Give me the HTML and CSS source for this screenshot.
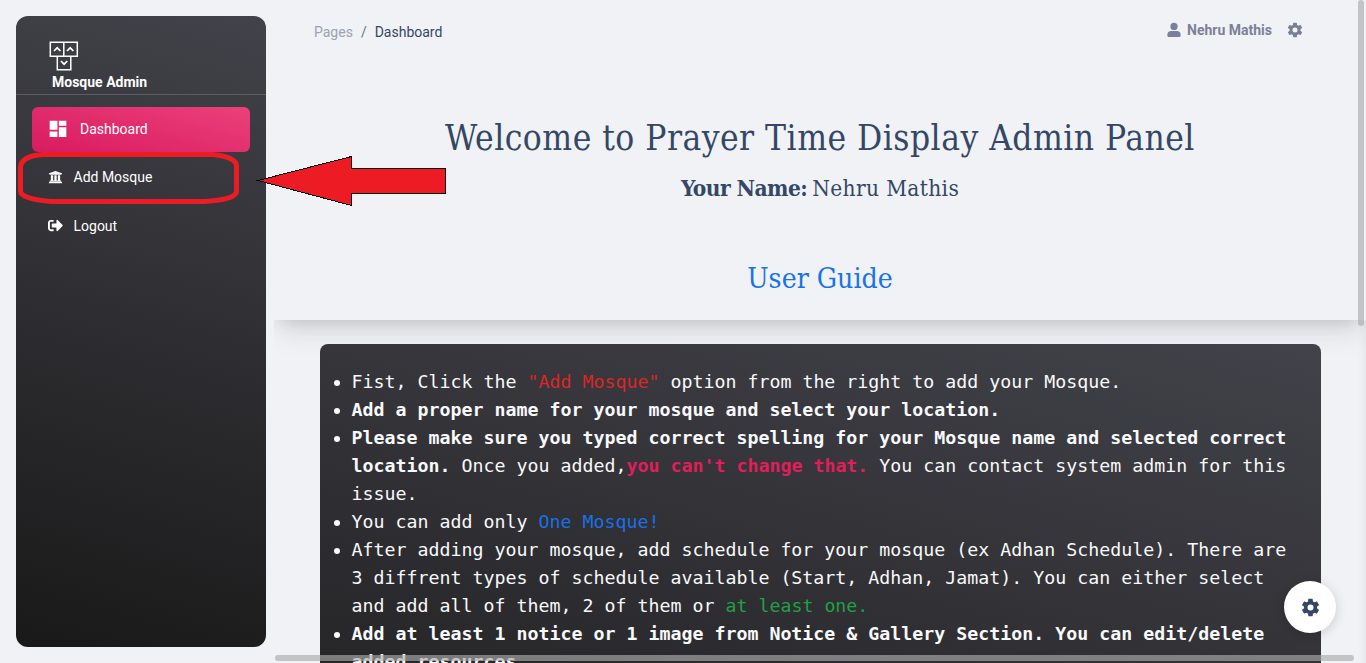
FILE: index.html
```
<!DOCTYPE html>
<html lang="en">
<head>
<meta charset="utf-8">
<title>Dashboard</title>
<link rel="stylesheet" href="styles.css">
</head>
<body>
<aside class="sidebar">
  <div class="brand">
    <svg class="logo" width="30" height="30" viewBox="0 0 30 30" fill="none" stroke="#fff" stroke-width="1.500"><path d="M1.300 1.200h13.500v14H1.300zM14.800 1.200h13.500v14H14.800zM8.300 15.200h13.500v13.500H8.300z"/><path d="M5 10l3.200-3.200L11.400 10M18 10l3.200-3.200L24.400 10M11.900 20l3.200 3.200L18.300 20" stroke-width="1.700"/></svg>
    <div class="brand-name">Mosque Admin</div>
  </div>
  <nav class="menu">
    <a class="item active"><svg width="20" height="20" viewBox="0 0 24 24" fill="#fff"><path d="M2 2h9.300v11H2zM2 15h9.300v6.500H2zM13 2h9v6h-9zM13 10h9v11.500h-9z"/></svg><span>Dashboard</span></a>
    <a class="item"><svg width="14" height="14" viewBox="0 0 512 512" fill="#fff"><path d="M496 128v16a8 8 0 0 1-8 8h-24v12c0 6.600-5.400 12-12 12H60c-6.600 0-12-5.400-12-12v-12H24a8 8 0 0 1-8-8v-16a8 8 0 0 1 5-7.400l232-88a8 8 0 0 1 6 0l232 88a8 8 0 0 1 5 7.400zm-24 304H40c-13.300 0-24 10.700-24 24v16a8 8 0 0 0 8 8h464a8 8 0 0 0 8-8v-16c0-13.300-10.700-24-24-24zM86 192v192H60c-6.600 0-12 5.400-12 12v20h416v-20c0-6.600-5.400-12-12-12h-26V192h-84v192h-44V192h-84v192h-44V192H86z"/></svg><span>Add Mosque</span></a>
    <a class="item"><svg width="15" height="15" viewBox="0 0 512 512" fill="#fff"><path d="M497 273L329 441c-15 15-41 4.500-41-17v-96H152c-13.300 0-24-10.700-24-24v-96c0-13.300 10.700-24 24-24h136V88c0-21.400 25.900-32 41-17l168 168c9.300 9.400 9.300 24.600 0 34zM192 436v-40c0-6.600-5.400-12-12-12H96c-17.700 0-32-14.300-32-32V160c0-17.700 14.300-32 32-32h84c6.600 0 12-5.400 12-12V76c0-6.600-5.400-12-12-12H96c-53 0-96 43-96 96v192c0 53 43 96 96 96h84c6.600 0 12-5.400 12-12z"/></svg><span>Logout</span></a>
  </nav>
</aside>
<main class="main">
  <header class="topbar">
    <div class="crumbs"><span class="muted">Pages</span><span class="slash">/</span><span>Dashboard</span></div>
    <div class="user">
      <svg width="14" height="16" viewBox="0 0 448 512" fill="#7b809a"><circle cx="224" cy="140" r="116"/><path d="M134 288h180c74 0 124 50 124 124v22c0 27-21 48-48 48H58c-27 0-48-21-48-48v-22c0-74 50-124 124-124z"/></svg>
      <span>Nehru Mathis</span>
      <svg class="cog" width="16" height="16" viewBox="1.500 1.500 21 21" fill="#7b809a"><path fill-rule="evenodd" d="M19.140 12.940a7 7 0 0 0 0-1.880l2.030-1.580c.18-.14.23-.41.12-.61l-1.920-3.320c-.12-.22-.37-.29-.59-.22l-2.390.96a7 7 0 0 0-1.620-.94L14.400 2.810c-.04-.24-.24-.41-.48-.41h-3.840c-.24 0-.43.17-.47.41l-.36 2.540a7 7 0 0 0-1.620.94l-2.390-.96c-.22-.08-.47 0-.59.22L2.740 8.870c-.12.21-.08.47.12.61l2.030 1.580a7 7 0 0 0 0 1.880l-2.030 1.580c-.18.14-.23.41-.12.61l1.920 3.320c.12.22.37.29.59.22l2.390-.96a7 7 0 0 0 1.620.94l.36 2.540c.05.24.24.41.48.41h3.840c.24 0 .44-.17.47-.41l.36-2.540a7 7 0 0 0 1.620-.94l2.390.96c.22.08.47 0 .59-.22l1.920-3.320c.12-.22.07-.47-.12-.61zM12 15.300a3.300 3.300 0 1 1 0-6.600 3.300 3.300 0 0 1 0 6.600z"/></svg>
    </div>
  </header>
  <section class="hero">
    <h1>Welcome to Prayer Time Display Admin Panel</h1>
    <p class="name"><b>Your Name:</b><span>Nehru Mathis</span></p>
    <h2>User Guide</h2>
  </section>
  <section class="guide">
    <ul>
      <li>Fist, Click the <span class="red">"Add Mosque"</span> option from the right to add your Mosque.</li>
      <li><b>Add a proper name for your mosque and select your location.</b></li>
      <li><b>Please make sure you typed correct spelling for your Mosque name and selected correct location.</b> Once you added,<b class="pink">you can't change that.</b> You can contact system admin for this issue.</li>
      <li>You can add only <span class="blue">One Mosque!</span></li>
      <li>After adding your mosque, add schedule for your mosque (ex Adhan Schedule). There are 3 diffrent types of schedule available (Start, Adhan, Jamat). You can either select and add all of them, 2 of them or <span class="green">at least one.</span></li>
      <li><b>Add at least 1 notice or 1 image from Notice &amp; Gallery Section. You can edit/delete added resources.</b></li>
    </ul>
  </section>
</main>
<div class="edge"></div>
<div class="bar-y"></div>
<div class="bar-x"></div>
<div class="fab"><svg width="19" height="19" viewBox="1.500 1.500 21 21" fill="#344767"><path fill-rule="evenodd" d="M19.140 12.940a7 7 0 0 0 0-1.880l2.030-1.580c.18-.14.23-.41.12-.61l-1.920-3.320c-.12-.22-.37-.29-.59-.22l-2.390.96a7 7 0 0 0-1.620-.94L14.400 2.810c-.04-.24-.24-.41-.48-.41h-3.840c-.24 0-.43.17-.47.41l-.36 2.540a7 7 0 0 0-1.620.94l-2.390-.96c-.22-.08-.47 0-.59.22L2.740 8.870c-.12.21-.08.47.12.61l2.030 1.580a7 7 0 0 0 0 1.880l-2.030 1.580c-.18.14-.23.41-.12.61l1.920 3.320c.12.22.37.29.59.22l2.390-.96a7 7 0 0 0 1.620.94l.36 2.540c.05.24.24.41.48.41h3.840c.24 0 .44-.17.47-.41l.36-2.540a7 7 0 0 0 1.620-.94l2.390.96c.22.08.47 0 .59-.22l1.920-3.320c.12-.22.07-.47-.12-.61zM12 15.300a3.300 3.300 0 1 1 0-6.600 3.300 3.300 0 0 1 0 6.600z"/></svg></div>
<svg class="notes" width="450" height="210" viewBox="0 0 450 210">
  <path d="M43 154.500H213C227 156 236.500 160 236.500 166V191C236.500 197 226 200 204 201.500H52C31 200 20.500 196 20.500 191V168C20.500 160 28 155.500 43 154.500Z" fill="none" stroke="#ed1c24" stroke-width="5"/>
  <path d="M258 180.500L351.500 156.500V168.500H445.500V193.500H351.500V205.500Z" fill="#ed1c24" stroke="#000" stroke-width="1" shape-rendering="crispEdges"/>
</svg>
</body>
</html>
```
FILE: styles.css
```
* { box-sizing: border-box; }
body {
  margin: 0;
  width: 1366px;
  height: 663px;
  display: flex;
  overflow: hidden;
  position: relative;
  background: #f0f2f5;
  color: #344767;
  font-family: Roboto, sans-serif;
  font-size: 14px;
}
.sidebar {
  flex: none;
  width: 250px;
  height: 631px;
  margin: 16px 8px 16px 16px;
  border-radius: 12px;
  background: linear-gradient(195deg, #42424a, #191919);
  color: #fff;
}
.brand {
  height: 79px;
  padding: 25px 0 0 33px;
  border-bottom: 1px solid #5d5d62;
}
.logo { display: block; }
.brand-name { padding-left: 3px; line-height: 22px; font-weight: 700; }
.menu { padding: 12px 16px; display: flex; flex-direction: column; gap: 4px; }
.item { height: 45px; padding: 0 0 4px 15.500px; display: flex; align-items: center; gap: 11px; }
.item svg { flex: none; width: 15px; }
.item.active {
  gap: 12px;
  padding: 0 0 2px 16px;
  border-radius: 6px;
  background: linear-gradient(195deg, #ec407a, #d81b60);
}
.item.active svg { width: 20px; }
.main { flex: none; width: 1092px; height: 663px; overflow: hidden; }
.topbar {
  height: 64px;
  padding: 0 63px 0 40px;
  display: flex;
  justify-content: space-between;
  align-items: center;
}
.crumbs { display: flex; gap: 8px; }
.muted { color: #9aa3b3; }
.slash { color: #6c757d; }
.user { display: flex; align-items: center; gap: 6px; color: #7b809a; font-weight: 700; padding-bottom: 4px; }
.cog { margin-left: 9px; }
.hero {
  height: 256px;
  padding-top: 51px;
  text-align: center;
  box-shadow: 0 13px 27px -5px rgba(50, 50, 50, .17), 0 8px 16px -8px rgba(0, 0, 0, .12);
  clip-path: inset(0 0 -60px 0);
  font-family: "Roboto Slab", "DejaVu Serif Condensed", "DejaVu Serif", serif;
  white-space: nowrap;
}
.hero h1 { margin: 0; font-size: 35px; line-height: 46px; font-weight: 400; letter-spacing: .48px; }
.hero .name { margin: 10px 0 0; display: flex; justify-content: center; gap: 5px; font-size: 22.500px; line-height: 34px; }
.name b { letter-spacing: -.55px; }
.name span { letter-spacing: .35px; }
.hero h2 { margin: 54px 0 0; font-size: 28.200px; line-height: 40px; font-weight: 400; color: #1a73e8; }
.guide {
  position: relative;
  width: 1001px;
  height: 600px;
  margin: 24px 0 0 46px;
  padding: 24px 32px 24px 31.500px;
  border-radius: 8px;
  background: linear-gradient(195deg, #42424a, #191919);
  color: #f8f9fa;
  font-family: "DejaVu Sans Mono", monospace;
  font-size: 18.270px;
  line-height: 28px;
}
.guide ul { margin: 0; padding: 0; }
.red { color: #dc2626; }
.pink { color: #e01e5a; }
.blue { color: #1a6fe8; }
.green { color: #1fa045; }
.edge {
  position: absolute; left: 1358px; top: 321px; width: 8px; height: 342px;
  background: linear-gradient(90deg, rgba(0,0,0,0), rgba(0,0,0,.04));
}
.bar-y { position: absolute; left: 1358px; top: 0; width: 6px; height: 326px; border-radius: 3px; background: rgba(170,170,170,.65); }
.bar-x { position: absolute; left: 275px; top: 655px; width: 1079px; height: 6px; border-radius: 3px; background: rgba(170,170,170,.65); }
.fab {
  position: absolute; left: 1284px; top: 581px; width: 52px; height: 52px;
  display: flex; align-items: center; justify-content: center;
  border-radius: 50%;
  background: #fff;
  box-shadow: 0 2px 12px rgba(0,0,0,.16);
}
.notes { position: absolute; left: 0; top: 0; }
```
